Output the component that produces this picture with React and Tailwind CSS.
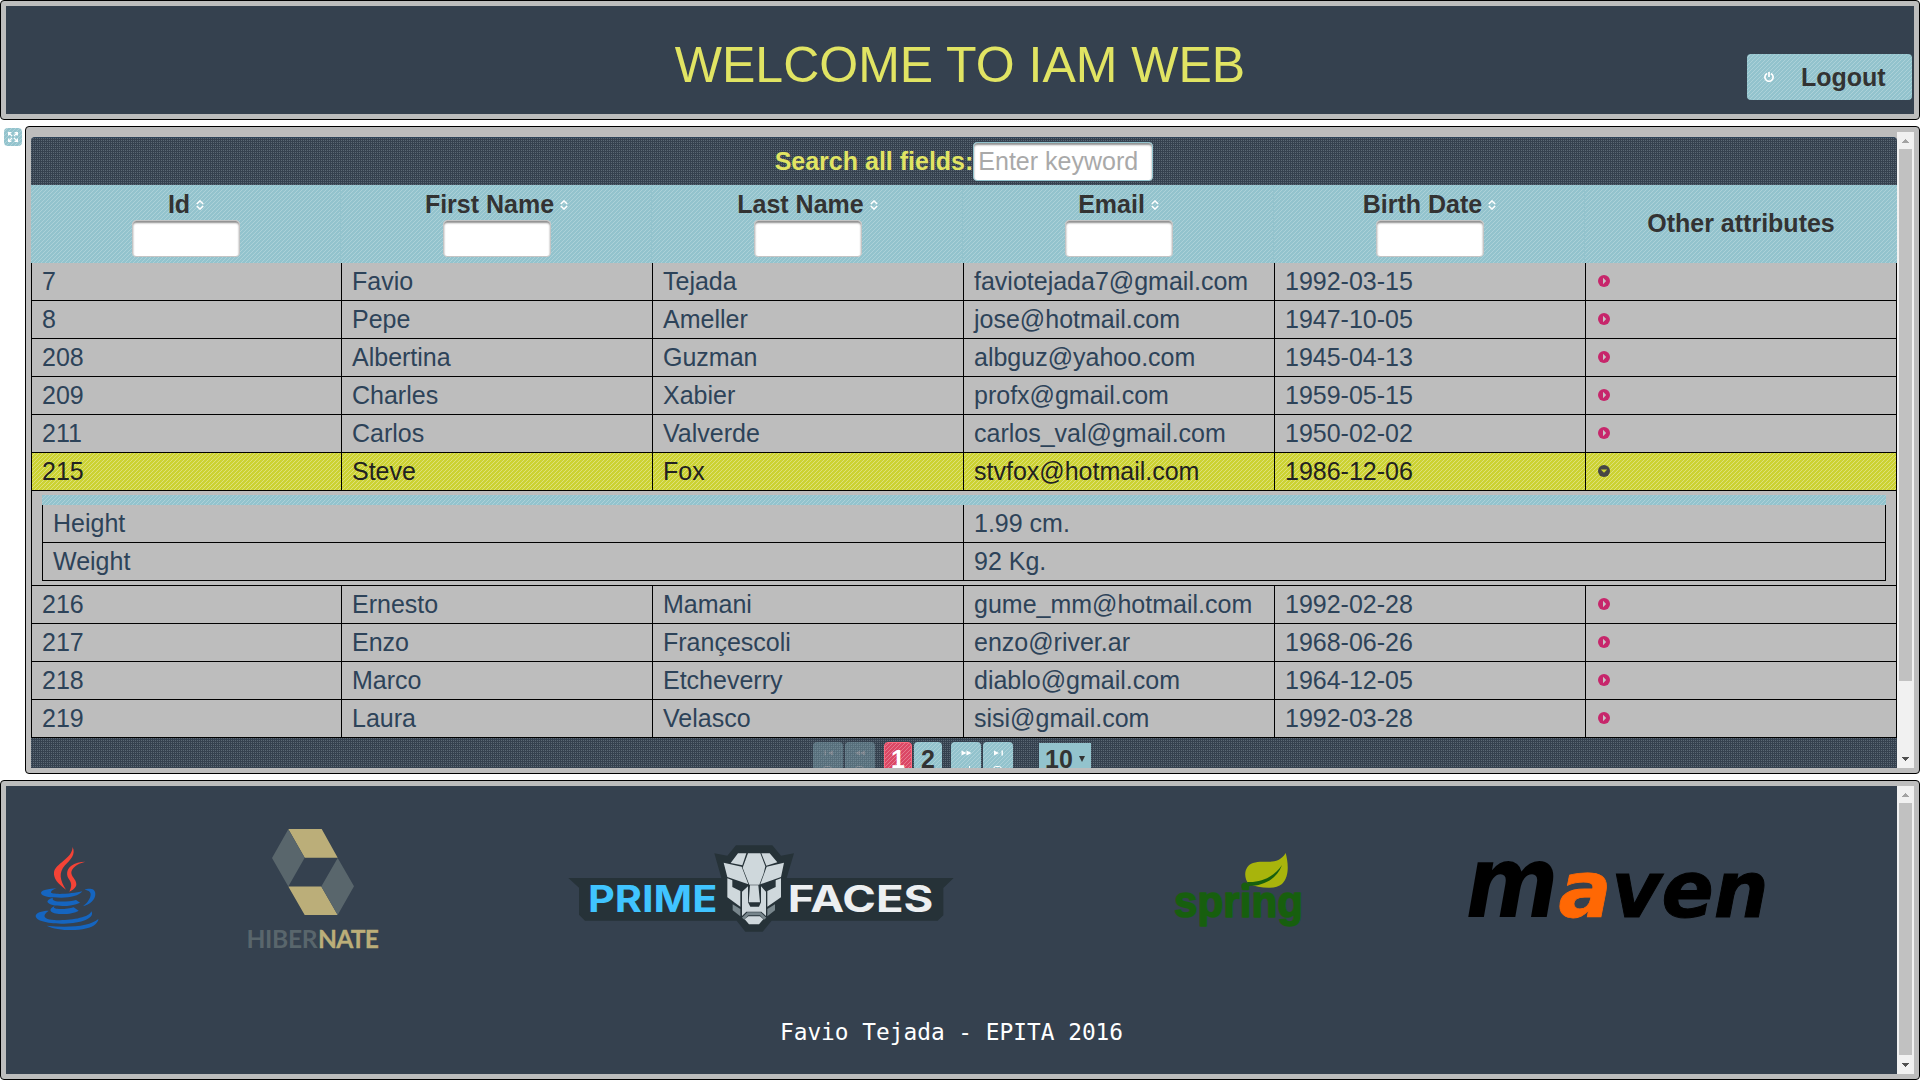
import React from "react";

const STRIPES =
  "bg-[#93c3cd] bg-[linear-gradient(135deg,transparent_0_43.75%,#acd1d8_43.75%_56.25%,transparent_56.25%)] bg-[length:4px_4px]";
const YELLOW =
  "bg-[#ccd232] bg-[linear-gradient(135deg,transparent_0_43.75%,#dde07a_43.75%_56.25%,transparent_56.25%)] bg-[length:4px_4px]";
const PINK =
  "bg-[#db4865] bg-[linear-gradient(135deg,transparent_0_43.75%,#e5798e_43.75%_56.25%,transparent_56.25%)] bg-[length:4px_4px]";
const GRID = "grid grid-cols-[310px_311px_311px_311px_311px_312px]";

const rowsTop = [
  ["7", "Favio", "Tejada", "faviotejada7@gmail.com", "1992-03-15"],
  ["8", "Pepe", "Ameller", "jose@hotmail.com", "1947-10-05"],
  ["208", "Albertina", "Guzman", "albguz@yahoo.com", "1945-04-13"],
  ["209", "Charles", "Xabier", "profx@gmail.com", "1959-05-15"],
  ["211", "Carlos", "Valverde", "carlos_val@gmail.com", "1950-02-02"],
  ["215", "Steve", "Fox", "stvfox@hotmail.com", "1986-12-06"],
];
const rowsBottom = [
  ["216", "Ernesto", "Mamani", "gume_mm@hotmail.com", "1992-02-28"],
  ["217", "Enzo", "Françescoli", "enzo@river.ar", "1968-06-26"],
  ["218", "Marco", "Etcheverry", "diablo@gmail.com", "1964-12-05"],
  ["219", "Laura", "Velasco", "sisi@gmail.com", "1992-03-28"],
];

function Dots({ className = "", children }) {
  return (
    <div className={`bg-[#35414f] bg-[radial-gradient(circle_at_0.5px_0.5px,#5b6874_0_0.6px,transparent_0.6px)] bg-[length:2px_2px] ${className}`}>
      {children}
    </div>
  );
}

function Scrollbar({ thumb }) {
  return (
    <div className="flex w-[17px] shrink-0 flex-col items-center bg-[#f1f1f1]">
      <svg className="h-[17px] w-[17px] shrink-0" viewBox="0 0 17 17" shapeRendering="crispEdges">
        <path d="M5 11h7v-1h-1v-1h-1v-1h-1v-1h-1v1h-1v1h-1v1h-1z" fill="#a3a3a3" />
      </svg>
      <div className={`w-[13px] bg-[#c1c1c1] ${thumb}`} />
      <svg className="mt-auto h-[17px] w-[17px] shrink-0" viewBox="0 0 17 17" shapeRendering="crispEdges">
        <path d="M5 6h7v1h-1v1h-1v1h-1v1h-1v-1h-1v-1h-1v-1h-1z" fill="#505050" />
      </svg>
    </div>
  );
}

function SortIcon() {
  return (
    <svg className="ml-1.5 mt-[7px] h-[10px] w-2" viewBox="0 0 8 10" fill="none" stroke="#fff" strokeWidth="1.5">
      <path d="M0.8 4 4 0.9 7.2 4M0.8 6 4 9.1 7.2 6" />
    </svg>
  );
}

function Row({ row, open }) {
  return (
    <div className={`${GRID} h-[38px] border-b border-black ${open ? `${YELLOW} text-[#212121]` : ""}`}>
      {row.map((c) => (
        <div key={c} className="border-l border-black pl-2.5 leading-[36px]">
          {c}
        </div>
      ))}
      <div className="flex items-center border-x border-black pb-px pl-3">
        <svg className="h-3 w-3" viewBox="0 0 12 12">
          <circle cx="6" cy="6" r="6" fill={open ? "#454545" : "#c7266b"} />
          {open ? <path d="M2.8 4.5h6.400L6 7.700z" fill="#ccd232" /> : <path d="M5 2.800v6.400L8.200 6z" fill="#c9c3c6" />}
        </svg>
      </div>
    </div>
  );
}

function Toggle() {
  return (
    <div className={`ml-1 mt-0.5 flex h-[18px] w-[18px] items-center justify-center rounded ${STRIPES}`}>
      <svg className="h-[10px] w-[10px]" viewBox="0 0 10 10" fill="none" stroke="#fff" strokeWidth="1.2">
        <path d="M.6 3.4V.6h2.8M6.6.6h2.8v2.8M9.4 6.6v2.8H6.6M3.4 9.4H.6V6.6M.6.6 4 4M9.4.6 6 4M9.4 9.4 6 6M.6 9.4 4 6" />
      </svg>
    </div>
  );
}

function PagerButton({ d, sub, disabled, className = "" }) {
  return (
    <div className={`h-[34px] w-[30px] rounded ${STRIPES} ${disabled ? "opacity-35" : ""} ${className}`}>
      <svg className="h-[34px] w-[30px]" viewBox="0 0 30 34" fill="#fff">
        <path d={d} />
        <path d={sub} fill="none" stroke="#fff" />
      </svg>
    </div>
  );
}

function JavaLogo() {
  return (
    <svg className="ml-[29px] h-[86px] w-16" viewBox="105 137 192 258">
      <g fill="#f44336">
        <path d="M218 140C228 163 211 178 195 195C175 217 180 241 198 268C174 251 160 235 162 216C165 190 217 175 218 140Z" />
        <path d="M256 184C229 191 215 204 214 216C213 229 229 237 229 252C229 262 219 269 208 274C215 260 216 250 207 237C199 225 198 208 214 196C225 188 240 184 256 184Z" />
      </g>
      <g fill="#1565c0">
        <path d="M170 264C146 265 123 270 123 278C124 289 151 292 184 292C211 292 238 286 247 273C219 281 153 284 153 276C153 271 161 267 170 264Z" />
        <path d="M254 268C264 264 286 262 286 281C286 299 269 313 249 318C263 307 272 294 272 282C272 272 263 270 254 268Z" />
        <path d="M159 292C145 296 141 302 143 306C149 319 211 322 240 307L228 299C204 305 150 308 159 292Z" />
        <path d="M164 318C151 322 149 330 154 334C166 345 218 343 236 331L221 321C201 328 151 329 164 318Z" />
        <path d="M146 331C124 331 107 338 107 347C108 363 148 370 192 370C243 370 287 353 274 333C267 361 139 368 134 349C132 342 140 336 146 331Z" />
        <path d="M140 376C176 394 264 395 287 371C293 365 295 361 295 356C272 377 208 384 140 376Z" />
      </g>
    </svg>
  );
}

function HibernateLogo() {
  return (
    <svg className="ml-[149px] h-[120px] w-[132px]" viewBox="248 829 132 120">
      <path d="M288.3 829H321.7L337.7 857.7H304.7ZM288.3 886.5H321.3L337.7 915H304.7Z" fill="#bbae79" />
      <path d="M288.3 829.3 304.7 857.7 288.3 886.5 272 858ZM337.7 858 354 886.3 337.7 915 321.3 886.5Z" fill="#59666c" />
      <g fontFamily="Lato, sans-serif" fontSize="24.6" fontWeight="700">
        <text x="246.5" y="947.5" textLength="71" fill="#59666c">HIBER</text>
        <text x="318" y="947.5" textLength="61" fill="#bbae79" stroke="#bbae79" strokeWidth="0.3">NATE</text>
      </g>
    </svg>
  );
}

function PrimeFacesLogo() {
  return (
    <svg className="mb-px ml-[188px] h-[87px] w-[386px]" viewBox="24 44 1158 261">
      <path
        d="M25 143H484L463 69 502 76 528 45H637L663 76 702 69 680 143H1181L1150 173V255L1133 271H635L608 304H556L530 271H75L57 253V172Z"
        fill="#263238"
      />
      <path d="M518 222 541 236V258L518 240ZM645 222 622 236V258L645 240ZM546 262 562 246H602L619 262 612 268 600 255H565L553 268Z" fill="#78868c" />
      <g fill="#cfd8dc">
        <path d="M534 69H559L547 105 512 98ZM604 69H629L652 96 619 106ZM564 69H601L616 108 611 129 598 163H568L548 112Z" />
        <path d="M491 97 545 109 565 162 502 140ZM672 97 620 109 601 162 663 140Z" />
        <path d="M502 144 517 150V170L541 182V229L502 201ZM663 144 647 150V170L622 182V229L663 201Z" />
        <path d="M546 184 564 168V216L571 229H597L603 216V168L618 184V257L604 244H559L546 257Z" />
        <path d="M570 165H595L600 216H566ZM565 258H600L610 267 597 282H567L554 267Z" />
      </g>
      <g fontFamily="Inter, sans-serif" fontWeight="700" fontSize="109">
        <text x="84" y="246" textLength="388" lengthAdjust="spacingAndGlyphs" fill="#40c4ff">PRIME</text>
        <text x="683" y="246" textLength="437" lengthAdjust="spacingAndGlyphs" fill="#eceff1">FACES</text>
      </g>
    </svg>
  );
}

function SpringLogo() {
  return (
    <svg className="ml-[220px] mt-0.5 h-[78px] w-[130px]" viewBox="1174 851 130 78">
      <path d="M1285.7 853C1288 862 1290 876 1282 884C1275 890 1259 888 1249 884C1243 878 1244 866 1253 863C1264 859 1277 867 1285.7 853Z" fill="#a8b40c" />
      <path d="M1282 865C1277 879 1264 886 1249 886L1247 882C1261 883 1274 877 1282 865Z" fill="#175f0e" />
      <circle cx="1245" cy="886" r="3.6" fill="#175f0e" />
      <text
        x="1174" y="917" textLength="129" lengthAdjust="spacingAndGlyphs" fontFamily="Liberation Sans, sans-serif"
        fontWeight="700" fontSize="45" fill="#175f0e" stroke="#175f0e" strokeWidth="1.6" strokeLinejoin="round"
      >
        spring
      </text>
    </svg>
  );
}

function MavenLogo() {
  return (
    <svg className="ml-[164px] h-[60px] w-[304px]" viewBox="1466 858 304 60">
      <g fontFamily="DejaVu Sans, sans-serif" fontWeight="700" fontStyle="italic">
        <text x="1463.5" y="916" fontSize="99" textLength="93" lengthAdjust="spacingAndGlyphs">m</text>
        <text x="1556.500" y="916" fontSize="79" textLength="53" lengthAdjust="spacingAndGlyphs" fill="#ff6804" stroke="#ff6804" strokeWidth="0.8">a</text>
        <text x="1609.500" y="916" fontSize="79" textLength="157" lengthAdjust="spacingAndGlyphs" stroke="#000" strokeWidth="1">ven</text>
      </g>
    </svg>
  );
}

export default function App() {
  const panel = "rounded-[4px] border border-black bg-[#bdbdbd] p-[5px]";
  return (
    <div className="flex h-[1080px] w-[1920px] flex-col gap-1.5 overflow-hidden bg-white font-['Liberation_Sans',Arial,sans-serif] text-[25px] text-[#2d4359]">
      <header className={`h-[120px] shrink-0 ${panel}`}>
        <div className="grid h-full grid-cols-[1fr_auto_1fr] bg-[#35414f]">
          <div />
          <h1 className="mt-[30px] text-[50px] leading-[58px] text-[#e1e463]">WELCOME TO IAM WEB</h1>
          <button className={`mr-0.5 mt-12 flex h-[46px] w-[165px] items-center justify-self-end rounded pl-[17px] font-bold text-[#333] ${STRIPES}`}>
            <svg className="h-[10px] w-[10px]" viewBox="0 0 10 10" fill="none" stroke="#fff" strokeWidth="1.700">
              <path d="M3 1.6A4.1 4.1 0 1 0 7 1.6M5 0V5" />
            </svg>
            <span className="ml-[27px] pt-0.5">Logout</span>
          </button>
        </div>
      </header>

      <div className="flex h-[648px] shrink-0">
        <div className="w-[25px] shrink-0">
          <Toggle />
        </div>
        <main className={`flex min-w-0 flex-1 ${panel}`}>
          <div className="flex w-[1866px] flex-col overflow-hidden pt-[5px]">
            <Dots className="flex h-12 shrink-0 items-center justify-center rounded-t border-t border-[#2d4359] font-bold text-[#e1e463]">
              <span>Search all fields:</span>
              <div className="h-[39px] w-[180px] rounded border border-[#93c3cd] bg-white pl-1 text-[25px] font-normal leading-[37px] text-[#a9a9a9] shadow-[inset_0_2px_2px_#8f8f8f]">
                Enter keyword
              </div>
            </Dots>
            <div className={`${GRID} h-[78px] shrink-0 font-bold text-[#333] ${STRIPES}`}>
              {["Id", "First Name", "Last Name", "Email", "Birth Date"].map((h) => (
                <div key={h} className="flex flex-col items-center border-r border-[#93c3cd] pl-px pt-1">
                  <div className="flex h-[31px] items-start leading-[31px]">
                    {h}
                    <div className="pt-1">
                      <SortIcon />
                    </div>
                  </div>
                  <div className="h-[37px] w-[108px] rounded border border-[#c4c4c4] bg-white shadow-[inset_0_2px_2px_#8f8f8f]" />
                </div>
              ))}
              <div className="flex items-center justify-center">Other attributes</div>
            </div>
            <div className="shrink-0">
              {rowsTop.map((r, i) => (
                <Row key={r[0]} row={r} open={i === 5} />
              ))}
              <div className="h-[95px] border-x border-b border-black px-[10px] pt-1">
                <div className={`h-2.5 ${STRIPES}`} />
                {[["Height", "1.99 cm."], ["Weight", "92 Kg."]].map(([k, v]) => (
                  <div key={k} className="grid h-[38px] grid-cols-[921px_1fr] border-b border-r border-black leading-[36px]">
                    <div className="border-l border-black pl-2.5">{k}</div>
                    <div className="border-l border-black pl-2.5">{v}</div>
                  </div>
                ))}
              </div>
              {rowsBottom.map((r) => (
                <Row key={r[0]} row={r} />
              ))}
            </div>
            <Dots className="flex h-[60px] shrink-0 items-start pl-[782px] pt-1 font-bold text-[#333]">
              <PagerButton disabled d="M11.5 8.5h1.4v5h-1.4zM20 8.5v5l-5-2.500z" sub="M11 28v-2q0-1.500 1.500-1.500h4q1.500 0 1.500 1.500v2" />
              <PagerButton disabled className="ml-0.5" d="M15 8.500v5L10 11zM20 8.500v5L15 11z" sub="M11 28v-2q0-1.500 1.500-1.500h4q1.500 0 1.500 1.500v2" />
              <div className={`ml-[9px] h-[34px] w-7 rounded border border-[#ff6b7f] text-center leading-[33px] text-white ${PINK}`}>1</div>
              <div className={`ml-0.5 h-[34px] w-7 rounded text-center leading-[35px] ${STRIPES}`}>2</div>
              <PagerButton className="ml-[9px]" d="M10.500 8.500v5l5-2.500zM15.500 8.500v5l5-2.500z" sub="M18.500 24v4" />
              <PagerButton className="ml-0.5" d="M11 8.500v5l5-2.500zM18.500 8.500h1.400v5h-1.400z" sub="M11 28v-2q0-1.500 1.500-1.500h4q1.500 0 1.500 1.500v2" />
              <div className="ml-[26px] mt-px flex h-[34px] w-[52px] bg-[#93c3cd] pl-[6px] leading-[33px]">
                10
                <svg className="ml-1.5 mt-[13px] h-1.5 w-1.5" viewBox="0 0 6 6">
                  <path d="M0 0h6L3 6z" fill="#333" />
                </svg>
              </div>
            </Dots>
          </div>
          <Scrollbar thumb="h-[532px]" />
        </main>
      </div>

      <footer className={`flex h-[300px] shrink-0 ${panel}`}>
        <div className="flex w-[1891px] shrink-0 flex-col bg-[#35414f]">
          <div className="mt-[43px] flex h-[120px] items-center">
            <JavaLogo />
            <HibernateLogo />
            <PrimeFacesLogo />
            <SpringLogo />
            <MavenLogo />
          </div>
          <p className="mt-[69px] text-center font-['DejaVu_Sans_Mono',monospace] text-[22.8px] leading-[28px] text-white">
            Favio Tejada - EPITA 2016
          </p>
        </div>
        <Scrollbar thumb="h-[252px]" />
      </footer>
    </div>
  );
}
